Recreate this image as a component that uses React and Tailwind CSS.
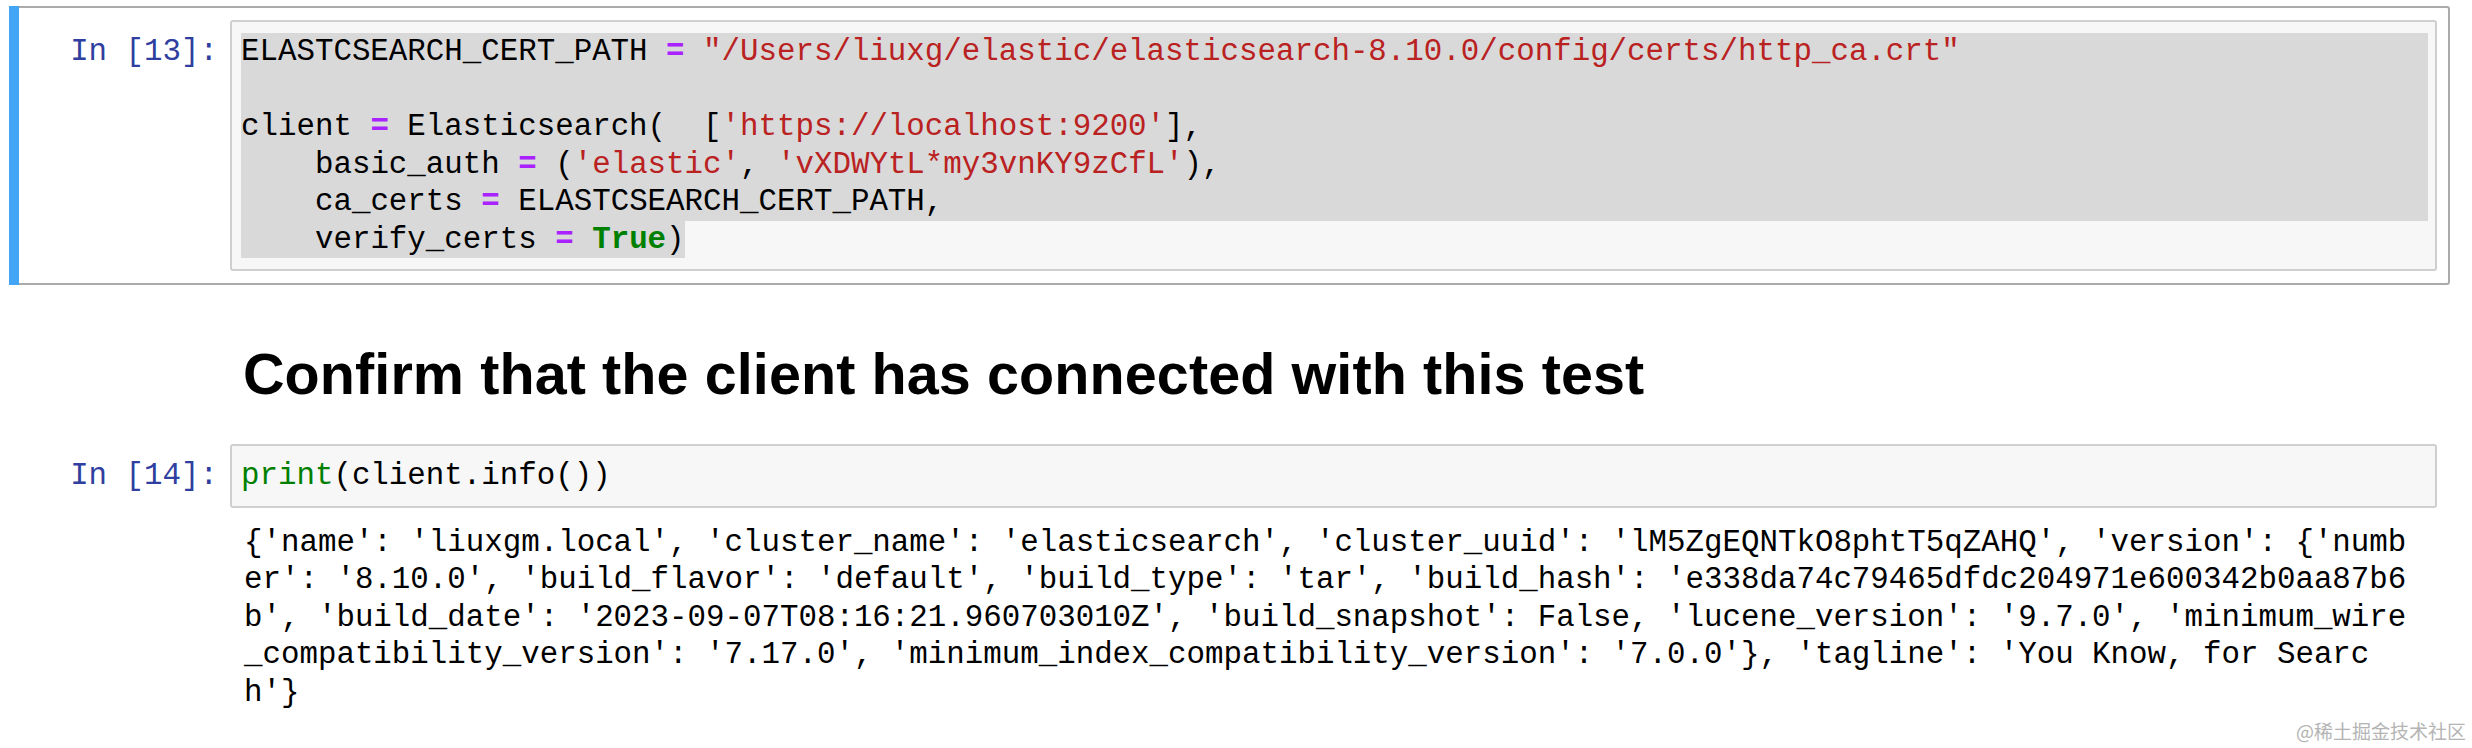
import React from 'react';

const Op = ({ children }) => <span className="text-[#aa22ff] font-bold">{children}</span>;
const Str = ({ children }) => <span className="text-[#ba2121]">{children}</span>;
const Kw = ({ children }) => <span className="text-[#008000] font-bold">{children}</span>;
const Bi = ({ children }) => <span className="text-[#008000]">{children}</span>;

function Prompt({ n }) {
  return (
    <div className="w-[208px] shrink-0 text-right pr-[12px] pt-[13px] text-[#303f9f] whitespace-pre">
      In [{n}]:
    </div>
  );
}

const output = [
  "{'name': 'liuxgm.local', 'cluster_name': 'elasticsearch', 'cluster_uuid': 'lM5ZgEQNTkO8phtT5qZAHQ', 'version': {'numb",
  "er': '8.10.0', 'build_flavor': 'default', 'build_type': 'tar', 'build_hash': 'e338da74c79465dfdc204971e600342b0aa87b6",
  "b', 'build_date': '2023-09-07T08:16:21.960703010Z', 'build_snapshot': False, 'lucene_version': '9.7.0', 'minimum_wire",
  "_compatibility_version': '7.17.0', 'minimum_index_compatibility_version': '7.0.0'}, 'tagline': 'You Know, for Searc",
  "h'}"
];

export default function App() {
  return (
    <div className="relative w-[2472px] h-[748px] overflow-hidden bg-white text-black font-['Liberation_Mono','DejaVu_Sans_Mono',monospace] text-[30.8px] leading-[37.5px]">
      <div className="pt-[6px] pl-[9px] pr-[22px]">
        {/* selected code cell */}
        <div className="relative flex border-2 border-[#ababab] rounded-[3px] px-[11px] py-[12px]">
          <div className="absolute left-[-2px] top-[-2px] bottom-[-2px] w-[10px] bg-[#42a5f5]" />
          <Prompt n={13} />
          <div className="flex-1 border-2 border-[#cfcfcf] rounded-[3px] bg-[#f7f7f7] pl-[9px] pr-[7px] py-[11px] whitespace-pre">
            <div className="bg-[#d9d9d9]">
              ELASTCSEARCH_CERT_PATH <Op>=</Op> <Str>"/Users/liuxg/elastic/elasticsearch-8.10.0/config/certs/http_ca.crt"</Str>
            </div>
            <div className="bg-[#d9d9d9] h-[37.5px]"> </div>
            <div className="bg-[#d9d9d9]">
              client <Op>=</Op> Elasticsearch(  [<Str>'https://localhost:9200'</Str>],
            </div>
            <div className="bg-[#d9d9d9]">
              {'    '}basic_auth <Op>=</Op> (<Str>'elastic'</Str>, <Str>'vXDWYtL*my3vnKY9zCfL'</Str>),
            </div>
            <div className="bg-[#d9d9d9]">
              {'    '}ca_certs <Op>=</Op> ELASTCSEARCH_CERT_PATH,
            </div>
            <div>
              <span className="bg-[#d9d9d9] inline-block">
                {'    '}verify_certs <Op>=</Op> <Kw>True</Kw>)
              </span>
            </div>
          </div>
        </div>

        {/* markdown heading */}
        <h1 className="mt-[56px] pl-[234px] font-['Liberation_Sans',Arial,sans-serif] font-bold text-[57.5px] leading-[66px] tracking-[0.1px] text-black">
          Confirm that the client has connected with this test
        </h1>

        {/* second code cell */}
        <div className="mt-[23px] border-2 border-transparent px-[11px] py-[12px]">
          <div className="flex">
            <Prompt n={14} />
            <div className="flex-1 border-2 border-[#cfcfcf] rounded-[3px] bg-[#f7f7f7] pl-[9px] pr-[7px] py-[11px] whitespace-pre">
              <Bi>print</Bi>(client.info())
            </div>
          </div>
          <div className="flex mt-[16px]">
            <div className="w-[208px] shrink-0" />
            <div className="pl-[14px] whitespace-pre">
              {output.map((l, i) => (
                <div key={i}>{l}</div>
              ))}
            </div>
          </div>
        </div>
      </div>

      <div className="absolute right-[6px] bottom-[5px] text-[19px] leading-[24px] text-[#b4b4b4] font-['Noto_Sans_CJK_SC',sans-serif]">
        @稀土掘金技术社区
      </div>
    </div>
  );
}
